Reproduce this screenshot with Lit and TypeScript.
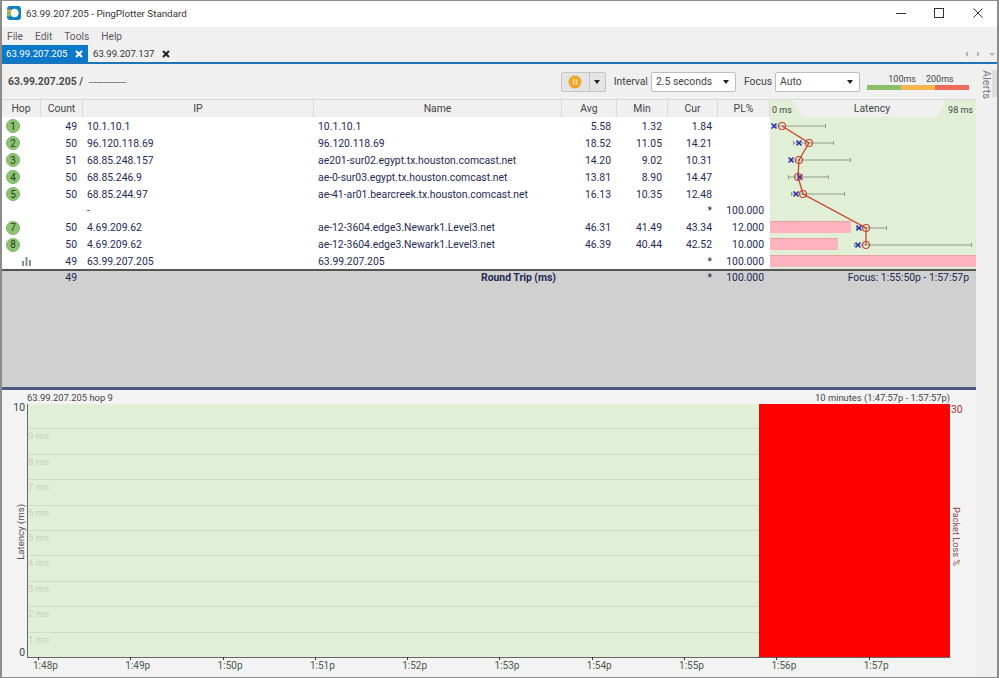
import { LitElement, html, css, svg } from "lit";
import { customElement } from "lit/decorators.js";

interface Hop {
  hop: number;
  count: string;
  ip: string;
  name: string;
  avg: string;
  min: string;
  cur: string;
  pl: string;
}

const HOPS: Hop[] = [
  { hop: 1, count: "49", ip: "10.1.10.1", name: "10.1.10.1", avg: "5.58", min: "1.32", cur: "1.84", pl: "" },
  { hop: 2, count: "50", ip: "96.120.118.69", name: "96.120.118.69", avg: "18.52", min: "11.05", cur: "14.21", pl: "" },
  { hop: 3, count: "51", ip: "68.85.248.157", name: "ae201-sur02.egypt.tx.houston.comcast.net", avg: "14.20", min: "9.02", cur: "10.31", pl: "" },
  { hop: 4, count: "50", ip: "68.85.246.9", name: "ae-0-sur03.egypt.tx.houston.comcast.net", avg: "13.81", min: "8.90", cur: "14.47", pl: "" },
  { hop: 5, count: "50", ip: "68.85.244.97", name: "ae-41-ar01.bearcreek.tx.houston.comcast.net", avg: "16.13", min: "10.35", cur: "12.48", pl: "" },
  { hop: 6, count: "", ip: "-", name: "", avg: "", min: "", cur: "*", pl: "100.000" },
  { hop: 7, count: "50", ip: "4.69.209.62", name: "ae-12-3604.edge3.Newark1.Level3.net", avg: "46.31", min: "41.49", cur: "43.34", pl: "12.000" },
  { hop: 8, count: "50", ip: "4.69.209.62", name: "ae-12-3604.edge3.Newark1.Level3.net", avg: "46.39", min: "40.44", cur: "42.52", pl: "10.000" },
  { hop: 9, count: "49", ip: "63.99.207.205", name: "63.99.207.205", avg: "", min: "", cur: "*", pl: "100.000" },
];

// graph marks, in pixels inside the latency column
const MARKS = [
  { y: 9, cur: 4, avg: 12, lo: 4, hi: 56 },
  { y: 26, cur: 29, avg: 39, lo: 23, hi: 64 },
  { y: 43, cur: 21, avg: 29, lo: 21, hi: 81 },
  { y: 60, cur: 30, avg: 28, lo: 18, hi: 59 },
  { y: 77, cur: 26, avg: 33, lo: 21, hi: 75 },
  { y: 111, cur: 89, avg: 96, lo: 86, hi: 117 },
  { y: 128, cur: 88, avg: 96, lo: 84, hi: 202 },
];

const BARS = [
  { y: 104, w: 81 },
  { y: 121, w: 68 },
  { y: 138, w: 206 },
];

const MS_LABELS = ["", "9 ms", "8 ms", "7 ms", "6 ms", "5 ms", "4 ms", "3 ms", "2 ms", "1 ms"];
const TIMES = ["1:48p", "1:49p", "1:50p", "1:51p", "1:52p", "1:53p", "1:54p", "1:55p", "1:56p", "1:57p"];

@customElement("latency-graph")
export class LatencyGraph extends LitElement {
  static styles = css`
    :host {
      display: block;
      width: 206px;
      height: 152px;
      background: #e0efd6;
    }
    svg {
      display: block;
    }
  `;

  render() {
    const line = MARKS.map((m) => `${m.avg},${m.y}`).join(" ");
    return html`
      <svg width="206" height="152" viewBox="0 0 206 152">
        ${BARS.map(
          (b) => svg`<rect x="0" y=${b.y} width=${b.w} height="12" fill="#ffb3bd" stroke="none"></rect>
            <rect x="0" y=${b.y} width=${b.w} height="1" fill="#e8a0a0"></rect>`
        )}
        ${MARKS.map(
          (m) => svg`<path d="M${m.lo} ${m.y}H${m.hi}M${m.lo + 0.5} ${m.y - 2}v4M${m.hi - 0.5} ${m.y - 2}v4" stroke="#8f9c8f" stroke-width="1" fill="none"></path>`
        )}
        <polyline points=${line} fill="none" stroke="#c8452f" stroke-width="1.3"></polyline>
        ${MARKS.map(
          (m) => svg`<path d="M${m.cur - 2.5} ${m.y - 2.5}l5 5m0 -5l-5 5" stroke="#2b2bb0" stroke-width="1.5" fill="none"></path>
            <circle cx=${m.avg} cy=${m.y} r="3.5" fill="none" stroke="#c8452f" stroke-width="1.1"></circle>`
        )}
      </svg>
    `;
  }
}

@customElement("app-root")
export class AppRoot extends LitElement {
  static styles = css`
    :host {
      display: block;
      width: 999px;
      height: 678px;
      overflow: hidden;
      font-family: Roboto, "Liberation Sans", sans-serif;
      font-size: 10.4px;
      color: #2b3350;
    }
    * {
      box-sizing: border-box;
    }
    .window {
      width: 999px;
      height: 678px;
      display: flex;
      flex-direction: column;
      border: 1px solid #8c8c8c;
      border-left-width: 2px;
      border-right-width: 2px;
      background: #f0f0f0;
    }
    .titlebar {
      height: 26px;
      flex: none;
      background: #fff;
      display: flex;
      align-items: center;
      padding-left: 5px;
      padding-bottom: 2px;
      font-size: 9.8px;
      color: #333;
    }
    .titlebar .title {
      margin-left: 5px;
      flex: 1;
    }
    .winbtn {
      width: 38.5px;
      flex: none;
      display: flex;
      justify-content: center;
    }
    .menu {
      height: 18px;
      flex: none;
      display: flex;
      gap: 12px;
      align-items: center;
      padding-left: 5px;
      font-size: 10.2px;
      color: #5c5c5c;
    }
    .tabs {
      height: 17px;
      flex: none;
      display: flex;
      align-items: center;
      font-size: 9.6px;
    }
    .tab {
      height: 17px;
      display: flex;
      align-items: center;
      padding: 0 0 0 4px;
      gap: 7px;
      color: #333;
    }
    .tab.active {
      width: 86px;
      background: #0b79c9;
      color: #fff;
    }
    .tab + .tab {
      padding-left: 5px;
    }
    .tab svg {
      flex: none;
    }
    .tab-nav {
      margin-left: auto;
      display: flex;
      gap: 6px;
      align-items: center;
      padding-right: 2px;
    }
    .rule {
      height: 2px;
      flex: none;
      background: #1b75b8;
    }
    .content {
      flex: 1;
      min-height: 0;
      display: flex;
    }
    .main {
      width: 974px;
      flex: none;
      display: flex;
      flex-direction: column;
    }
    .alerts {
      flex: 1;
      position: relative;
      padding: 6px 0 0 4px;
      color: #777;
    }
    .alerts span {
      display: block;
      writing-mode: vertical-rl;
      font-size: 11px;
    }
    .alerts i {
      position: absolute;
      right: 0;
      top: 6px;
      width: 5px;
      height: 27px;
      background: #dcdcdc;
    }
    .toolbar {
      height: 35px;
      flex: none;
      display: flex;
      align-items: center;
      padding-left: 6px;
      padding-right: 7px;
    }
    .target {
      font-weight: 700;
      color: #4a4a4a;
      flex: 1;
    }
    .target span {
      font-weight: 400;
      font-size: 9px;
      margin-left: 3px;
    }
    .pause {
      width: 45px;
      height: 20px;
      display: flex;
      border: 1px solid #c4c4c4;
      border-radius: 2px;
      background: #e4e4e4;
    }
    .pause .p {
      width: 28px;
      display: flex;
      align-items: center;
      justify-content: center;
      border-right: 1px solid #c4c4c4;
    }
    .pause .d {
      flex: 1;
      display: flex;
      align-items: center;
      justify-content: center;
    }
    .caret {
      width: 0;
      height: 0;
      border-left: 3px solid transparent;
      border-right: 3px solid transparent;
      border-top: 4px solid #222;
    }
    .lbl {
      color: #444;
      margin: 0 3px 0 8px;
    }
    .select {
      height: 20px;
      width: 85px;
      background: #fff;
      border: 1px solid #bdbdbd;
      border-radius: 2px;
      display: flex;
      align-items: center;
      justify-content: space-between;
      padding: 0 6px 0 4px;
      color: #444;
    }
    .legend {
      width: 102px;
      margin-left: 7px;
      font-size: 9px;
      color: #444;
    }
    .legend .ticks {
      display: flex;
      justify-content: center;
      gap: 10px;
      padding-left: 6px;
      line-height: 10px;
    }
    .legend .strip {
      display: flex;
      height: 5px;
      margin-top: 1px;
    }
    .legend .strip i {
      flex: 1;
    }
    .row {
      display: grid;
      grid-template-columns: 39px 42px 231px 248px 55px 51px 50px 52px;
    }
    .head {
      height: 18px;
      flex: none;
      display: flex;
      background: #f0f0f0;
      border-top: 1px solid #d8d8d8;
    }
    .head .h {
      display: flex;
      align-items: center;
      justify-content: center;
      border-right: 1px solid #d9d9d9;
      color: #444;
    }
    .lat-head {
      position: relative;
      width: 206px;
      background: #e0efd6;
      display: flex;
      align-items: center;
      justify-content: space-between;
      padding: 2px 3px 0 2px;
      font-size: 9px;
      color: #444;
    }
    .lat-head::before {
      content: "";
      position: absolute;
      left: 22px;
      right: 30px;
      top: 0;
      bottom: 0;
      background: #f0f0f0;
      clip-path: polygon(0 0, 100% 0, 94% 100%, 7% 100%);
    }
    .lat-head b {
      position: relative;
      font-weight: 400;
      font-size: 10.4px;
      margin-left: 4px;
      margin-top: -3px;
    }
    .body {
      display: flex;
      height: 152px;
      flex: none;
      background: #fff;
    }
    .rows {
      width: 768px;
      flex: none;
      padding-top: 1px;
    }
    .row {
      height: 16.9px;
      align-items: center;
      color: #1f2a55;
    }
    .row > div {
      white-space: nowrap;
    }
    .r {
      text-align: right;
      padding-right: 6px;
    }
    .l {
      padding-left: 4px;
    }
    .badge {
      width: 14px;
      height: 14px;
      margin-left: 4px;
      border-radius: 50%;
      background: #8cc474;
      border: 1px solid #7db565;
      color: #24401a;
      display: flex;
      align-items: center;
      justify-content: center;
      font-size: 10px;
    }
    .bars {
      margin-left: 20px;
      display: block;
    }
    .summary {
      height: 118px;
      flex: none;
      background: #d0d0d0;
      border-top: 2px solid #555;
    }
    .sumrow {
      display: grid;
      grid-template-columns: 39px 42px 231px 248px 55px 51px 50px 52px 206px;
      color: #1f2a55;
      height: 13px;
      align-items: center;
    }
    .sumrow .focus {
      padding-right: 7px;
    }
    .sumrow b {
      display: block;
      font-weight: 700;
      text-align: right;
    }
    .divider {
      height: 3px;
      flex: none;
      background: #4f5688;
    }
    .chart {
      flex: 1;
      min-height: 0;
      background: #f3f3f3;
      display: grid;
      grid-template-columns: 25px 923px 26px;
      grid-template-rows: 14px 254px 19px;
    }
    .chart-top {
      grid-column: 2;
      display: flex;
      justify-content: space-between;
      align-items: center;
      color: #444;
      font-size: 9.4px;
    }
    .y-left {
      grid-row: 2;
      grid-column: 1;
      display: flex;
      flex-direction: column;
      justify-content: space-between;
      align-items: flex-end;
      padding: 0 2px 0 0;
      margin: -3px 0 -1px;
      position: relative;
      color: #444;
    }
    .y-left .cap {
      position: absolute;
      left: 13px;
      top: 103px;
      writing-mode: vertical-rl;
      transform: rotate(180deg);
      font-size: 9.6px;
      color: #555;
    }
    .plot {
      grid-row: 2;
      grid-column: 2;
      display: flex;
      border-left: 1px solid #666;
      border-bottom: 1px solid #666;
    }
    .green {
      width: 731px;
      flex: none;
      display: flex;
      flex-direction: column;
      background: #e0efd6;
    }
    .green div {
      flex: 1;
      border-top: 1px solid #cfdfc6;
      color: #c4d3bc;
      font-size: 9.6px;
      padding-top: 1px;
    }
    .green div:first-child {
      border-top: none;
    }
    .red {
      flex: 1;
      background: #ff0000;
    }
    .y-right {
      grid-row: 2;
      grid-column: 3;
      position: relative;
      color: #a83232;
      padding-left: 1px;
      margin-top: -1px;
    }
    .y-right .cap {
      position: absolute;
      left: 1px;
      top: 104px;
      writing-mode: vertical-rl;
      font-size: 9.2px;
      color: #8a4a4a;
    }
    .times {
      grid-row: 3;
      grid-column: 2;
      display: flex;
      padding-left: 11px;
      color: #4a5a4a;
      font-size: 10px;
    }
    .times div {
      width: 92.3px;
      flex: none;
      padding-top: 2px;
      position: relative;
    }
    .times span {
      display: block;
      margin-left: -5px;
    }
    .times div::before {
      content: "";
      position: absolute;
      left: 0;
      top: -1px;
      width: 1px;
      height: 3px;
      background: #333;
    }
  `;

  private renderHop(h: Hop) {
    let mark = html`<div class="badge">${h.hop}</div>`;
    if (h.hop === 6) mark = html`<div></div>`;
    if (h.hop === 9) {
      mark = html`<svg class="bars" width="10" height="9" viewBox="0 0 10 9">
        <path d="M0 4h2v5H0zM3.5 0h2v9h-2zM7 3h2v6H7z" fill="#8a8f92"></path>
      </svg>`;
    }
    return html`
      <div class="row">
        <div>${mark}</div>
        <div class="r">${h.count}</div>
        <div class="l">${h.ip}</div>
        <div class="l">${h.name}</div>
        <div class="r">${h.avg}</div>
        <div class="r">${h.min}</div>
        <div class="r">${h.cur}</div>
        <div class="r">${h.pl}</div>
      </div>
    `;
  }

  private closeIcon(color: string) {
    return html`<svg width="8" height="8" viewBox="0 0 8 8">
      <path d="M1 1l6 6m0-6L1 7" stroke=${color} stroke-width="2" fill="none"></path>
    </svg>`;
  }

  render() {
    return html`
      <div class="window">
        <div class="titlebar">
          <svg width="14" height="14" viewBox="0 0 14 14">
            <rect width="14" height="14" rx="3" fill="#137fc4"></rect>
            <circle cx="7.5" cy="7" r="4.2" fill="#fff"></circle>
            <path d="M0 3.5h3.8v3.2H0z" fill="#f2a928"></path>
            <path d="M0 7.2h3.8v3.2H0z" fill="#7cc36a"></path>
          </svg>
          <span class="title">63.99.207.205 - PingPlotter Standard</span>
          <div class="winbtn">
            <svg width="10" height="10" viewBox="0 0 10 10"><path d="M0 5.5h10" stroke="#333" fill="none"></path></svg>
          </div>
          <div class="winbtn">
            <svg width="10" height="10" viewBox="0 0 10 10"><rect x=".5" y=".5" width="9" height="9" stroke="#333" fill="none"></rect></svg>
          </div>
          <div class="winbtn">
            <svg width="10" height="10" viewBox="0 0 10 10"><path d="M.5 .5l9 9m0-9l-9 9" stroke="#333" fill="none"></path></svg>
          </div>
        </div>
        <div class="menu"><span>File</span><span>Edit</span><span>Tools</span><span>Help</span></div>
        <div class="tabs">
          <div class="tab active"><span>63.99.207.205</span>${this.closeIcon("#fff")}</div>
          <div class="tab"><span>63.99.207.137</span>${this.closeIcon("#222")}</div>
          <div class="tab-nav">
            <svg width="30" height="8" viewBox="0 0 30 8">
              <path d="M3 1L0 4l3 3zM12 1l3 3-3 3zM24 3h6l-3 3z" fill="#b5b5b5"></path>
            </svg>
          </div>
        </div>
        <div class="rule"></div>
        <div class="content">
          <div class="main">
            <div class="toolbar">
              <div class="target">63.99.207.205 / <span>---------------</span></div>
              <div class="pause">
                <div class="p">
                  <svg width="14" height="14" viewBox="0 0 14 14">
                    <circle cx="7" cy="7" r="6.5" fill="#f0a528"></circle>
                    <path d="M4.8 4h1.5v6H4.8zM7.7 4h1.5v6H7.7z" fill="#fbe0a0"></path>
                  </svg>
                </div>
                <div class="d"><div class="caret"></div></div>
              </div>
              <span class="lbl">Interval</span>
              <div class="select"><span>2.5 seconds</span><div class="caret"></div></div>
              <span class="lbl">Focus</span>
              <div class="select"><span>Auto</span><div class="caret"></div></div>
              <div class="legend">
                <div class="ticks"><span>100ms</span><span>200ms</span></div>
                <div class="strip">
                  <i style="background:#8cc068"></i>
                  <i style="background:#f6b64d"></i>
                  <i style="background:#ee6a5a"></i>
                </div>
              </div>
            </div>
            <div class="head">
              <div class="h" style="width:39px">Hop</div>
              <div class="h" style="width:42px">Count</div>
              <div class="h" style="width:231px">IP</div>
              <div class="h" style="width:248px">Name</div>
              <div class="h" style="width:55px">Avg</div>
              <div class="h" style="width:51px">Min</div>
              <div class="h" style="width:50px">Cur</div>
              <div class="h" style="width:52px">PL%</div>
              <div class="lat-head"><span>0 ms</span><b>Latency</b><span>98 ms</span></div>
            </div>
            <div class="body">
              <div class="rows">${HOPS.map((h) => this.renderHop(h))}</div>
              <latency-graph></latency-graph>
            </div>
            <div class="summary">
              <div class="sumrow">
                <div></div>
                <div class="r">49</div>
                <div></div>
                <div class="r"><b>Round Trip (ms)</b></div>
                <div></div>
                <div></div>
                <div class="r">*</div>
                <div class="r">100.000</div>
                <div class="r focus">Focus: 1:55:50p - 1:57:57p</div>
              </div>
            </div>
            <div class="divider"></div>
            <div class="chart">
              <div class="chart-top">
                <span>63.99.207.205 hop 9</span>
                <span>10 minutes (1:47:57p - 1:57:57p)</span>
              </div>
              <div class="y-left">
                <span>10</span>
                <span class="cap">Latency (ms)</span>
                <span>0</span>
              </div>
              <div class="plot">
                <div class="green">
                  ${MS_LABELS.map((m) => html`<div>${m}</div>`)}
                </div>
                <div class="red"></div>
              </div>
              <div class="y-right">
                <span>30</span>
                <span class="cap">Packet Loss %</span>
              </div>
              <div class="times">
                ${TIMES.map((t) => html`<div><span>${t}</span></div>`)}
              </div>
            </div>
          </div>
          <div class="alerts"><span>Alerts</span><i></i></div>
        </div>
      </div>
    `;
  }
}
